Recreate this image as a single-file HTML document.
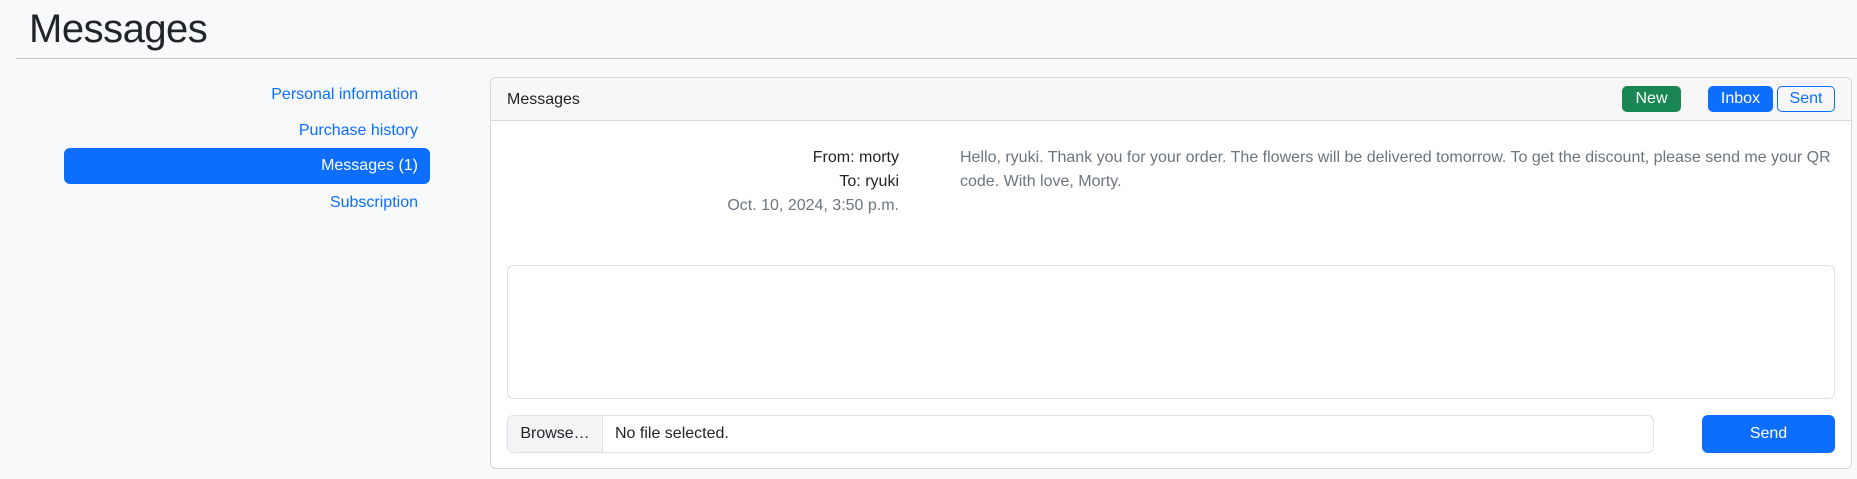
<!DOCTYPE html>
<html><head><style>
*{box-sizing:border-box;margin:0;padding:0}
body{width:1857px;height:479px;background:#f8f9fa;font-family:"Liberation Sans",sans-serif;font-size:16px;color:#212529;position:relative;overflow:hidden}
.a{position:absolute}
h1{position:absolute;left:29px;top:7px;font-size:40px;font-weight:400;color:#212529;letter-spacing:-0.5px}
.hr{left:16px;right:0;top:58px;height:1px;background:#c4c6c8}
.nav{right:calc(1857px - 418px);text-align:right;color:#0d6efd;line-height:20px;white-space:nowrap}
.pill{left:64px;top:148px;width:366px;height:36px;background:#0d6efd;border-radius:6px;color:#fff;text-align:right;padding-right:12px;line-height:36px}
.card{left:490px;top:77px;width:1362px;height:392px;border:1px solid #d5d7d9;border-radius:6px;background:#fff;overflow:hidden}
.hd{height:43px;background:#f7f7f7;border-bottom:1px solid #d5d7d9;position:relative}
.btn{position:absolute;border-radius:5px;text-align:center;font-size:16px;line-height:26px;height:26px}
</style></head><body>
<h1>Messages</h1>
<div class="a hr"></div>
<div class="a nav" style="top:85px">Personal information</div>
<div class="a nav" style="top:121px">Purchase history</div>
<div class="a pill">Messages (1)</div>
<div class="a nav" style="top:193px">Subscription</div>
<div class="a card">
 <div class="hd">
  <div class="a" style="left:16px;top:13px">Messages</div>
  <div class="btn" style="left:1131px;top:8px;width:59px;background:#198754;color:#fff">New</div>
  <div class="btn" style="left:1217px;top:8px;width:65px;background:#0d6efd;color:#fff">Inbox</div>
  <div class="btn" style="left:1286px;top:8px;width:58px;border:1px solid #0d6efd;color:#0d6efd;line-height:24px">Sent</div>
 </div>
 <div class="a" style="left:100px;width:308px;top:68px;text-align:right;line-height:24px">From: morty<br>To: ryuki<br><span style="color:#6c757d">Oct. 10, 2024, 3:50 p.m.</span></div>
 <div class="a" style="left:469px;width:880px;top:68px;line-height:24px;color:#6c757d;white-space:nowrap">Hello, ryuki. Thank you for your order. The flowers will be delivered tomorrow. To get the discount, please send me your QR<br>code. With love, Morty.</div>
 <div class="a" style="left:16px;top:187px;width:1328px;height:134px;border:1px solid #dee2e6;border-radius:6px"></div>
 <div class="a" style="left:16px;top:337px;width:1147px;height:38px;border:1px solid #dee2e6;border-radius:6px;overflow:hidden">
  <div class="a" style="left:0;top:0;width:95px;height:36px;background:#f3f4f5;border-right:1px solid #dee2e6;line-height:36px;text-align:center">Browse…</div>
  <div class="a" style="left:107px;top:0;line-height:36px">No file selected.</div>
 </div>
 <div class="a" style="left:1211px;top:337px;width:133px;height:38px;background:#0d6efd;border-radius:6px;color:#fff;text-align:center;line-height:38px">Send</div>
</div>
</body></html>
